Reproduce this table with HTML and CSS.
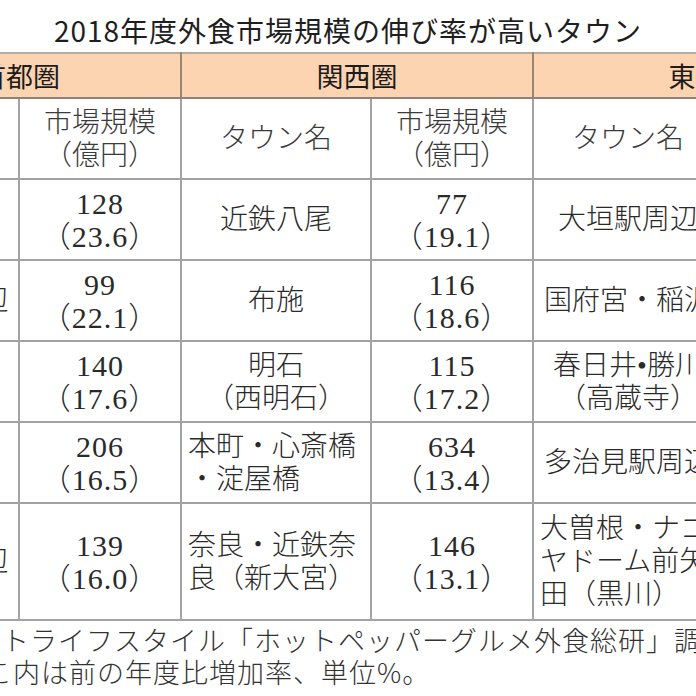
FILE: index.html
```html
<!DOCTYPE html>
<html lang="ja">
<head>
<meta charset="utf-8">
<link rel="stylesheet" href="styles.css">
</head>
<body>
<div class="page">
  <h1 class="title">2018年度外食市場規模の伸び率が高いタウン</h1>
  <table class="grid">
    <colgroup>
      <col class="c-town1"><col class="c-size"><col class="c-town"><col class="c-size"><col class="c-town"><col class="c-size">
    </colgroup>
    <thead>
      <tr class="region">
        <th colspan="2">首都圏</th>
        <th colspan="2">関西圏</th>
        <th colspan="2">東海圏</th>
      </tr>
    </thead>
    <tbody>
      <tr class="sub">
        <td>タウン名</td><td>市場規模<br>（億円）</td>
        <td>タウン名</td><td>市場規模<br>（億円）</td>
        <td>タウン名</td><td>市場規模<br>（億円）</td>
      </tr>
      <tr class="r">
        <td>恵比寿</td><td class="num">128<br>（23.6）</td>
        <td>近鉄八尾</td><td class="num">77<br>（19.1）</td>
        <td>大垣駅周辺</td><td class="num">58<br>（13.0）</td>
      </tr>
      <tr class="r">
        <td>大宮駅周辺</td><td class="num">99<br>（22.1）</td>
        <td>布施</td><td class="num">116<br>（18.6）</td>
        <td>国府宮・稲沢</td><td class="num">60<br>（11.9）</td>
      </tr>
      <tr class="r">
        <td>武蔵小杉</td><td class="num">140<br>（17.6）</td>
        <td>明石<br>（西明石）</td><td class="num">115<br>（17.2）</td>
        <td>春日井•勝川<br>（高蔵寺）</td><td class="num">101<br>（11.4）</td>
      </tr>
      <tr class="r">
        <td>浦和</td><td class="num">206<br>（16.5）</td>
        <td class="left">本町・心斎橋<br>・淀屋橋</td><td class="num">634<br>（13.4）</td>
        <td>多治見駅周辺</td><td class="num">51<br>（10.8）</td>
      </tr>
      <tr class="r tall">
        <td>町田駅周辺</td><td class="num">139<br>（16.0）</td>
        <td class="left">奈良・近鉄奈<br>良（新大宮）</td><td class="num">146<br>（13.1）</td>
        <td class="left">大曽根・ナゴ<br>ヤドーム前矢<br>田（黒川）</td><td class="num">149<br>（10.2）</td>
      </tr>
    </tbody>
  </table>
  <p class="note note1">ートライフスタイル「ホットペッパーグルメ外食総研」調べ</p>
  <p class="note note2">っこ内は前の年度比増加率、単位%。</p>
</div>
</body>
</html>
```
FILE: styles.css
```css
html, body {
  margin: 0;
  padding: 0;
  background: #ffffff;
}
body {
  width: 696px;
  height: 696px;
  overflow: hidden;
}
.page {
  width: 696px;
  overflow: hidden;
  color: #222;
}
.title {
  margin: 0;
  padding-top: 13px;
  height: 52px;
  box-sizing: border-box;
  text-align: center;
  font-family: "Noto Sans CJK JP", sans-serif;
  font-weight: 400;
  font-size: 28px;
  line-height: 34px;
  letter-spacing: 1px;
  color: #1e1e1e;
  white-space: nowrap;
}
.grid {
  margin-left: -143px;
  border-collapse: collapse;
  table-layout: fixed;
  width: 1027px;
  font-family: "Liberation Serif", "Noto Sans CJK JP", serif;
  font-weight: 300;
  font-size: 28px;
  line-height: 33px;
  color: #2a2a2a;
}
.c-town1 { width: 161px; }
.c-size { width: 162px; }
.c-town { width: 190px; }
.grid td, .grid th {
  border: 2px solid #a3a3a3;
  padding: 0 6px;
  text-align: center;
  vertical-align: middle;
  white-space: nowrap;
  overflow: hidden;
}
.grid td.num {
  font-size: 30px;
  letter-spacing: 1px;
}
.region th {
  height: 45px;
  box-sizing: border-box;
  background: #fcd4b2;
  font-family: "Noto Sans CJK JP", sans-serif;
  font-weight: 400;
  font-size: 27px;
  line-height: 34px;
  color: #1c1c1c;
  border-top: 2px solid #b8aca0;
  border-bottom: 2px solid #8f8173;
  border-left: 2px solid #9a8570;
  border-right: 2px solid #9a8570;
  padding: 0;
}
.sub td {
  height: 81px;
  box-sizing: border-box;
  color: #3a3a3a;
}
.r td {
  height: 81px;
  box-sizing: border-box;
}
.r.tall td {
  height: 117px;
}
.grid td.left {
  text-align: left;
  padding-left: 6px;
}
.note {
  margin: 0;
  font-family: "Noto Sans CJK JP", sans-serif;
  font-weight: 300;
  font-size: 27px;
  line-height: 32px;
  color: #333;
  white-space: nowrap;
  letter-spacing: 1px;
}
.note1 {
  margin-top: 3px;
  margin-left: -26px;
}
.note2 {
  margin-left: -43px;
}
```
